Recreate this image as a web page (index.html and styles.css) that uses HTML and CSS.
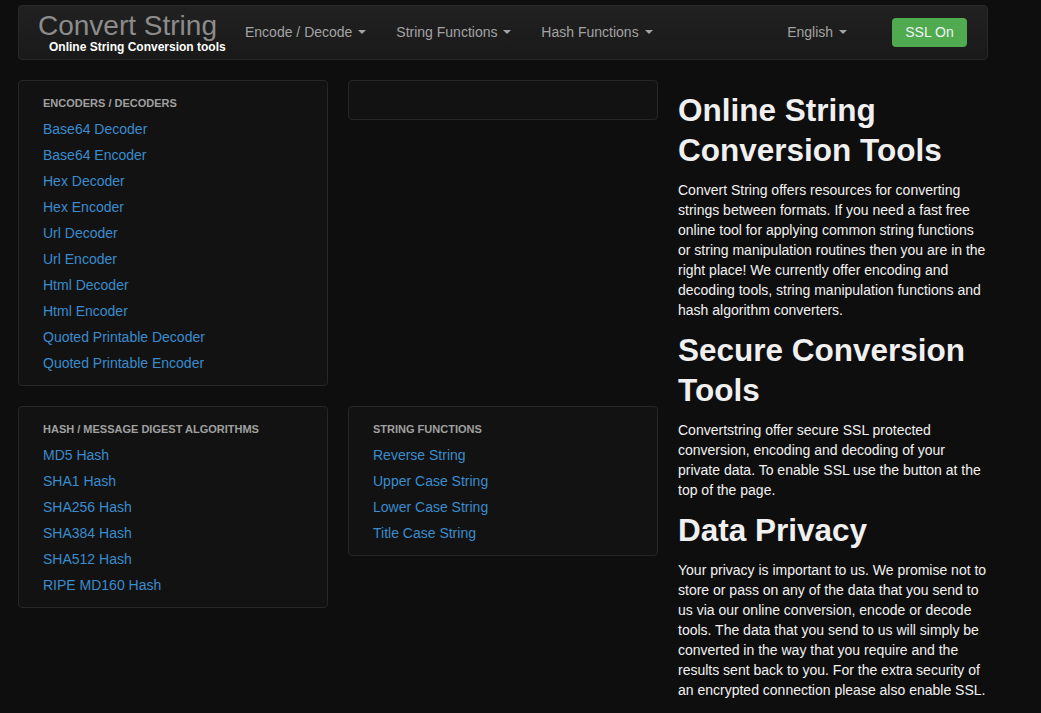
FILE: index.html
```html
<!DOCTYPE html>
<html lang="en">
<head>
<meta charset="utf-8">
<title>Convert String</title>
<link rel="stylesheet" href="styles.css">
</head>
<body>
<div class="page">
  <header class="navbar">
    <a class="brand" href="#">
      <span class="brand-title">Convert String</span>
      <span class="brand-sub">Online String Conversion tools</span>
    </a>
    <ul class="nav">
      <li><a href="#">Encode / Decode <b class="caret"></b></a></li>
      <li><a href="#">String Functions <b class="caret"></b></a></li>
      <li><a href="#">Hash Functions <b class="caret"></b></a></li>
    </ul>
    <ul class="nav nav-right">
      <li><a href="#">English <b class="caret"></b></a></li>
    </ul>
    <a class="btn-ssl" href="#">SSL On</a>
  </header>

  <main class="main">
    <div class="tools">
      <div class="well">
        <ul class="nav-list">
          <li class="nav-header">Encoders / Decoders</li>
          <li><a href="#">Base64 Decoder</a></li>
          <li><a href="#">Base64 Encoder</a></li>
          <li><a href="#">Hex Decoder</a></li>
          <li><a href="#">Hex Encoder</a></li>
          <li><a href="#">Url Decoder</a></li>
          <li><a href="#">Url Encoder</a></li>
          <li><a href="#">Html Decoder</a></li>
          <li><a href="#">Html Encoder</a></li>
          <li><a href="#">Quoted Printable Decoder</a></li>
          <li><a href="#">Quoted Printable Encoder</a></li>
        </ul>
      </div>
      <div class="well well-empty"></div>
      <div class="well">
        <ul class="nav-list">
          <li class="nav-header">Hash / Message Digest Algorithms</li>
          <li><a href="#">MD5 Hash</a></li>
          <li><a href="#">SHA1 Hash</a></li>
          <li><a href="#">SHA256 Hash</a></li>
          <li><a href="#">SHA384 Hash</a></li>
          <li><a href="#">SHA512 Hash</a></li>
          <li><a href="#">RIPE MD160 Hash</a></li>
        </ul>
      </div>
      <div class="well">
        <ul class="nav-list">
          <li class="nav-header">String Functions</li>
          <li><a href="#">Reverse String</a></li>
          <li><a href="#">Upper Case String</a></li>
          <li><a href="#">Lower Case String</a></li>
          <li><a href="#">Title Case String</a></li>
        </ul>
      </div>
    </div>

    <section class="info">
      <h1>Online String Conversion Tools</h1>
      <p>Convert String offers resources for converting strings between formats. If you need a fast free online tool for applying common string functions or string manipulation routines then you are in the right place! We currently offer encoding and decoding tools, string manipulation functions and hash algorithm converters.</p>
      <h1>Secure Conversion Tools</h1>
      <p>Convertstring offer secure SSL protected conversion, encoding and decoding of your private data. To enable SSL use the button at the top of the page.</p>
      <h1>Data Privacy</h1>
      <p>Your privacy is important to us. We promise not to store or pass on any of the data that you send to us via our online conversion, encode or decode tools. The data that you send to us will simply be converted in the way that you require and the results sent back to you. For the extra security of an encrypted connection please also enable SSL.</p>
    </section>
  </main>
</div>
</body>
</html>
```

FILE: styles.css
```css
* { box-sizing: border-box; }

html, body {
  margin: 0;
  padding: 0;
  background: #0e0e0e;
}

body {
  font-family: "Liberation Sans", Arial, Helvetica, sans-serif;
  font-size: 14px;
  line-height: 20px;
  color: #999;
}

a { text-decoration: none; }

.page {
  width: 970px;
  margin-left: 18px;
  padding-top: 5px;
}

/* Navbar */
.navbar {
  display: flex;
  align-items: center;
  height: 55px;
  padding: 0 20px 2px 19px;
  background: linear-gradient(#212121, #191919);
  border: 1px solid #292929;
  border-radius: 4px;
}

.brand {
  display: flex;
  flex-direction: column;
  width: 192px;
  padding-top: 1px;
}

.brand-title {
  font-size: 28px;
  line-height: 30px;
  color: #8c8c8c;
}

.brand-sub {
  margin-left: 11px;
  margin-top: -1px;
  font-size: 12px;
  line-height: 14px;
  font-weight: bold;
  color: #fff;
  white-space: nowrap;
}

.nav {
  display: flex;
  list-style: none;
  margin: 0;
  padding: 0;
}

.nav a {
  display: block;
  padding: 10px 15px;
  font-size: 14px;
  line-height: 20px;
  color: #a3a3a3;
}

.caret {
  display: inline-block;
  width: 0;
  height: 0;
  vertical-align: middle;
  margin-left: 2px;
  margin-top: -2px;
  border-top: 4px solid #a3a3a3;
  border-left: 4px solid transparent;
  border-right: 4px solid transparent;
}

.nav-right { margin-left: auto; }

.btn-ssl {
  display: block;
  margin-left: 30px;
  margin-top: 2px;
  width: 75px;
  height: 29px;
  line-height: 29px;
  text-align: center;
  font-size: 14px;
  color: #f4f4f4;
  background: #4faa50;
  border-radius: 4px;
}

/* Main */
.main {
  display: grid;
  grid-template-columns: 640px 310px;
  column-gap: 20px;
  margin-top: 20px;
}

.tools {
  display: grid;
  grid-template-columns: 310px 310px;
  column-gap: 20px;
  align-items: start;
  align-content: start;
}

.well {
  background: #121212;
  border: 1px solid #262626;
  border-radius: 4px;
  padding: 9px 0 9px 24px;
  margin-bottom: 20px;
}

.well-empty {
  height: 40px;
  padding: 0;
}

.nav-list {
  list-style: none;
  margin: 0;
  padding: 0;
}

.nav-list li {
  padding: 3px 0;
  line-height: 20px;
}

.nav-list .nav-header {
  font-size: 11px;
  font-weight: bold;
  text-transform: uppercase;
  color: #a0a0a0;
}

.nav-list a {
  color: #3a8ccd;
  font-size: 14px;
}

/* Info */
.info h1 {
  margin: 10px 0;
  font-size: 31.5px;
  line-height: 40px;
  font-weight: bold;
  color: #f0f0f0;
}

.info p {
  margin: 0 0 10px;
  font-size: 14px;
  line-height: 20px;
  color: #f2f2f2;
}
```
